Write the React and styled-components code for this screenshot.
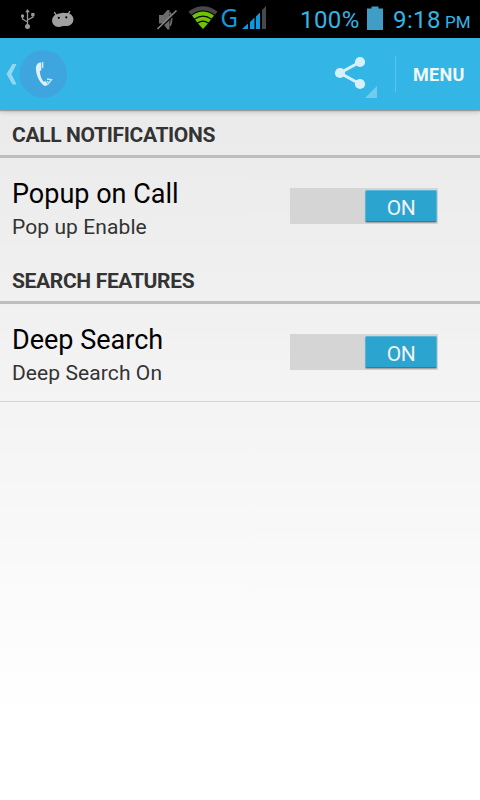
import React from 'react';
import styled, { createGlobalStyle } from 'styled-components';

const GlobalStyle = createGlobalStyle`
  body {
    margin: 0;
    background: #fff;
    font-family: Roboto, "Liberation Sans", sans-serif;
  }
`;

const Screen = styled.div`
  width: 480px;
  height: 800px;
  display: flex;
  flex-direction: column;
  overflow: hidden;
  background: linear-gradient(#e8e8e8 38px, #efefef 260px, #f4f4f4 410px, #fff 720px);
`;

const StatusBar = styled.div`
  height: 38px;
  flex: none;
  display: flex;
  background: #000;
  color: #33b5e5;
`;

const StatusIcons = styled.svg`
  width: 290px;
  height: 38px;
  flex: none;
`;

const StatusText = styled.span`
  width: ${(props) => props.$width}px;
  flex: none;
  margin-left: ${(props) => props.$left || 0}px;
  font-size: ${(props) => props.$size || 24}px;
  letter-spacing: ${(props) => props.$spacing || 0}px;
  line-height: ${(props) => props.$line || 40}px;
  white-space: nowrap;
`;

const Battery = styled.svg`
  width: 16px;
  height: 24px;
  flex: none;
  margin-top: 6px;
`;

const ActionBar = styled.header`
  height: 72px;
  flex: none;
  display: flex;
  align-items: center;
  background: #33b5e5;
  box-shadow: 0 1px 1px #9a9a9a, 0 2px 5px rgba(0, 0, 0, 0.18);
`;

const HomeIcon = styled.svg`
  width: 72px;
  height: 72px;
`;

const ShareIcon = styled.svg`
  width: 60px;
  height: 72px;
  margin-left: auto;
`;

const Separator = styled.div`
  width: 1px;
  height: 36px;
  margin-left: 5px;
  background: #5bc4ea;
`;

const MenuButton = styled.div`
  width: 67px;
  padding: 2px 0 0 17px;
  font-size: 18px;
  font-weight: 700;
  line-height: 22px;
  letter-spacing: 0.3px;
  color: #f1f9fc;
`;

const SectionTitle = styled.h2`
  height: 48px;
  flex: none;
  margin: 0;
  padding: 0 12px;
  box-sizing: border-box;
  border-bottom: 3px solid #bebebe;
  display: flex;
  align-items: flex-end;
  font-size: 21px;
  font-weight: 700;
  line-height: 40px;
  letter-spacing: -0.34px;
  color: #333;
`;

const Preference = styled.div`
  height: 98px;
  flex: none;
  box-sizing: border-box;
  padding: 0 42px 0 12px;
  display: flex;
  justify-content: space-between;
  border-bottom: 1px solid ${(props) => (props.$last ? '#d7d7d7' : 'transparent')};
`;

const Labels = styled.div`
  padding-top: 18px;
  white-space: nowrap;
`;

const Title = styled.div`
  font-size: 27px;
  line-height: 36px;
  color: #000;
`;

const Summary = styled.div`
  font-size: 21px;
  line-height: 30px;
  letter-spacing: 0.09px;
  color: #333;
`;

const Track = styled.div`
  width: 148px;
  height: 36px;
  margin-top: 30px;
  padding: 2px 1px 2px 75px;
  box-sizing: border-box;
  background: #d5d5d5;
`;

const Thumb = styled.div`
  height: 32px;
  box-sizing: border-box;
  border: 1px solid #58b5d5;
  border-bottom-color: #2383a5;
  border-radius: 2px;
  background: #2ca4d0;
  color: #f2f2f2;
  font-size: 21px;
  line-height: 34px;
  letter-spacing: -0.5px;
  text-align: center;
  box-shadow: 0 1px 1px rgba(0, 0, 0, 0.25);
`;

const Switch = () => (
  <Track>
    <Thumb>ON</Thumb>
  </Track>
);

const Icons = () => (
  <StatusIcons viewBox="0 0 290 38">
    {/* usb */}
    <g fill="none" stroke="#989898" strokeWidth="1.3">
      <path d="M27.5 11v14M27.5 22l-5-3v-3M27.5 20l5.5-3v-3" />
      <path d="M27.5 9l2.3 3.3h-4.6z" fill="#989898" stroke="none" />
      <circle cx="27.5" cy="26.5" r="2.5" fill="#989898" stroke="none" />
      <circle cx="22.5" cy="16" r="1.7" fill="#989898" stroke="none" />
      <path d="M31.2 13h3.3v3.2h-3.3z" fill="#989898" stroke="none" />
    </g>
    {/* debugging */}
    <path d="M54.3 12l2 3.5M69.8 11l-1.8 3.5" stroke="#a0a0a0" strokeWidth="1.4" />
    <g fill="#a0a0a0">
      <ellipse cx="58.3" cy="20.5" rx="6.3" ry="6.5" />
      <ellipse cx="67" cy="19.5" rx="6.5" ry="6.5" />
      <path d="M57 14l6-1.200 5 .5v12.200l-10 1.200z" />
    </g>
    <circle cx="58.8" cy="17.8" r="1.1" fill="#000" />
    <circle cx="66.3" cy="17.3" r="1.1" fill="#000" />
    {/* muted speaker */}
    <path d="M159 15h4l4.500-5h2v19.500h-2l-4.500-6h-4z" fill="#6b6b6b" />
    <path d="M170 12.500q3.200 6.500 0 13.500" fill="none" stroke="#6b6b6b" strokeWidth="1.8" />
    <path d="M158.500 29.500L177 12" stroke="#000" strokeWidth="1.500" />
    <path d="M157.500 29L176.500 10.500" stroke="#858585" strokeWidth="1.600" />
    {/* wifi */}
    <path d="M188.500 11.500Q203 .8 217.500 11.500l-2.500 3.300Q203 6 191 14.800z" fill="#484848" />
    <path d="M192 15.600Q203 7.500 214 15.600l-2.300 3Q203 12.500 194.300 18.600z" fill="#6fc400" />
    <path d="M195 19.500Q203 13.800 211 19.500l-2.300 3Q203 18.700 197.300 22.500z" fill="#6fc400" />
    <path d="M198 23.500Q203 20 208 23.500L203 29z" fill="#6fc400" />
    {/* signal */}
    <text
      x="220.5"
      y="27"
      fontSize="25.5"
      fontFamily="Noto Sans, sans-serif"
      textLength="17.5"
      lengthAdjust="spacingAndGlyphs"
      fill="#0c9be0"
    >
      G
    </text>
    <path d="M242 29l6-5.500V29zM250 22l4.500-4.500V29H250zM256 16.500l4-4V29h-4z" fill="#0c9be0" />
    <path d="M262 10l4-4v23h-4z" fill="#484848" />
  </StatusIcons>
);

const App = () => (
  <>
    <GlobalStyle />
    <Screen>
      <StatusBar>
        <Icons />
        <StatusText $left={10} $width={67} $spacing={0.4}>100%</StatusText>
        <Battery viewBox="0 0 16 24">
          <path d="M0 2.500h4.500V.5h7v2H16V24H0z" fill="#409dc5" />
        </Battery>
        <StatusText $left={10} $width={52} $spacing={0.4}>9:18</StatusText>
        <StatusText $width={30} $size={17} $line={44}>PM</StatusText>
      </StatusBar>
      <ActionBar>
        <HomeIcon viewBox="0 0 72 72">
          <path d="M12.500 26h4l-5 10 5 10.500h-4L6.500 36z" fill="#94d7f0" />
          <circle cx="43.300" cy="36" r="23.700" fill="#3ea5df" />
          <path
            d="M40 24.500C36.500 25.500 35.600 28.500 36 32c.5 6 3.500 12 7.500 15.200 1.500 1 3.500.6 4.500-.7L45.500 43l-2 .8c-2-2.800-3.500-6.300-3.700-10.600l1.500-1.200v-7.500z"
            fill="#e0f1fc"
          />
          <path d="M42.700 24v6" stroke="#e0f1fc" strokeWidth="1.200" />
          <path d="M47 41l4.500.8-3 3.700-1.200-2.500" fill="none" stroke="#c7e5f7" strokeWidth="1.400" />
        </HomeIcon>
        <ShareIcon viewBox="0 0 60 72">
          <path d="M30 24L10 35l20 11" fill="none" stroke="#d6f0fa" strokeWidth="3" />
          <g fill="#d6f0fa">
            <circle cx="30" cy="24" r="5.100" />
            <circle cx="10" cy="35" r="5.100" />
            <circle cx="30" cy="46" r="5.100" />
          </g>
          <path d="M47 48v12H35z" fill="#73ccee" />
        </ShareIcon>
        <Separator />
        <MenuButton>MENU</MenuButton>
      </ActionBar>
      <SectionTitle>CALL NOTIFICATIONS</SectionTitle>
      <Preference>
        <Labels>
          <Title>Popup on Call</Title>
          <Summary>Pop up Enable</Summary>
        </Labels>
        <Switch />
      </Preference>
      <SectionTitle>SEARCH FEATURES</SectionTitle>
      <Preference $last>
        <Labels>
          <Title>Deep Search</Title>
          <Summary>Deep Search On</Summary>
        </Labels>
        <Switch />
      </Preference>
    </Screen>
  </>
);

export default App;
